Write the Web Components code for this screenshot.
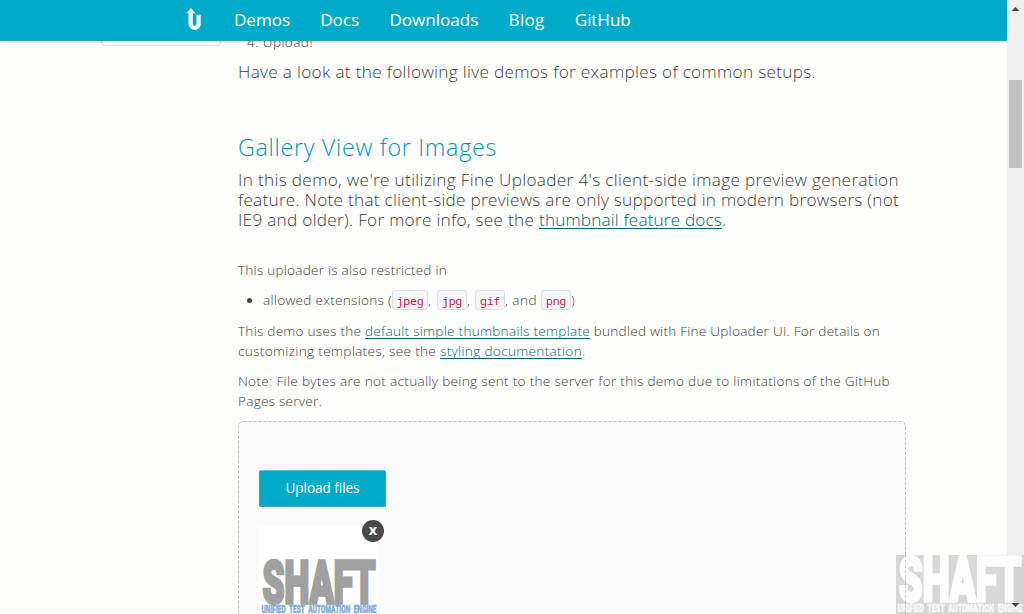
<!DOCTYPE html>
<html lang="en">
<head>
<meta charset="utf-8">
<title>Fine Uploader Demos</title>
<style>
html,body{margin:0;height:100%;overflow:hidden;background:#fefefc}
</style>
</head>
<body>
<demo-page></demo-page>
<script>
const define = (name, html, ready) => customElements.define(name, class extends HTMLElement {
  connectedCallback() {
    if (this.shadowRoot) return;
    const t = document.createElement('template');
    t.innerHTML = html;
    this.attachShadow({mode: 'open'}).append(t.content.cloneNode(true));
    if (ready) ready(this);
  }
});

/* Inline run of text tracked to a given measure */
define('text-run', `<style>
:host{display:inline-block;white-space:pre;vertical-align:baseline}
:host([link]){color:#00656f;text-decoration:underline;text-decoration-thickness:1px;text-underline-offset:2px;text-decoration-skip-ink:none}
span{display:inline-block;text-decoration:inherit}
</style><span><slot></slot></span>`, el => {
  const s = el.shadowRoot.querySelector('span'), w = +el.getAttribute('w');
  el.style.width = w + 'px';
  s.style.letterSpacing = (w - s.getBoundingClientRect().width) / el.textContent.length + 'px';
});

define('text-block', `<style>
:host{display:block;font-size:13.6px;line-height:20px;color:#3c3c3c;white-space:nowrap}
:host([lead]){font-size:17.2px}
::slotted(div){height:20px}
</style><slot></slot>`);

define('nav-bar', `<style>
:host{position:absolute;left:0;top:0;width:1007px;height:41px;box-sizing:border-box;display:flex;align-items:center;padding-left:186px;background:#00abc9;border-bottom:1px solid #23a3b6;box-shadow:0 1px 2px rgba(0,120,130,.25);color:#fff;font-size:17.2px;font-weight:500}
svg{width:16px;height:24px;margin-right:32px;margin-top:-2px;flex:none}
nav{display:flex;gap:30.2px;line-height:20px}
</style>
<svg viewBox="0 0 16 24"><path fill="#fff" d="M4.8 1 .3 6.300h2.200v9.200c0 4.700 2.600 7.200 6.200 7.200 3.700 0 6-2.500 6-6.800V7.700h-4.200v8.200c0 2.100-.6 3-1.800 3-1.300 0-1.900-.9-1.900-3V6.300h2.600z"/></svg>
<nav><text-run w="56">Demos</text-run><text-run w="39">Docs</text-run><text-run w="89">Downloads</text-run><text-run w="36">Blog</text-run><text-run w="56">GitHub</text-run></nav>`);

define('file-ext', `<style>
:host{display:flex;justify-content:center;align-items:center;box-sizing:border-box;height:20px;border:1px solid #dfdfe8;border-radius:3px;background:#f7f7f9;color:#d01445;font:11.5px/16px "Noto Sans Mono","DejaVu Sans Mono","Liberation Mono",monospace;letter-spacing:-.2px;padding-top:2px}
</style><slot></slot>`);

define('shaft-logo', `<style>
:host{display:block;line-height:0}
svg{display:block;width:100%;height:100%}
text{font-family:Roboto,"Open Sans",sans-serif;font-weight:900;stroke:currentColor;fill:currentColor}
.sub{fill:var(--sub);stroke:var(--sub);stroke-width:.35px;font-size:10.5px;word-spacing:3px}
</style><svg viewBox="0 0 118 58" preserveAspectRatio="none">
<text x="2.500" y="44.500" font-size="58.500" textLength="113" lengthAdjust="spacingAndGlyphs" stroke-width="3.300">SHAFT</text>
<text class="sub" x="1.500" y="54.800" textLength="115" lengthAdjust="spacingAndGlyphs">UNIFIED TEST AUTOMATION ENGINE</text></svg>`);

define('upload-panel', `<style>
:host{display:block;position:relative;box-sizing:border-box;width:668px;height:260px;border-radius:5px;background:#fafafa;padding:49px 21px}
.edge{position:absolute;left:0;top:0;width:668px;height:260px}
button{display:block;width:127px;height:37px;box-sizing:border-box;border:1px solid #35a9ba;border-top-color:#53c7d8;border-radius:2px;background:#00abc7;box-shadow:inset 0 0 0 1px rgba(0,145,180,.18);color:#fff;font:500 13.6px/20px "Open Sans","Noto Sans",sans-serif;padding:0 0 1px}
.thumb{position:relative;width:120px;height:100px;margin-top:18px;padding-top:33px;box-sizing:border-box;background:#fff}
shaft-logo{width:118px;height:58px;margin:0 1px;color:#a0a0a0;--sub:#7eabd2}
.close{position:absolute;left:103px;top:-5px;width:22px;height:22px;border-radius:50%;background:#494949;color:#fff;font:700 14.5px/20px "Open Sans",sans-serif;text-align:center}
</style>
<svg class="edge"><rect x=".5" y=".5" width="667" height="265" rx="5" fill="none" stroke="#c4c4c4" stroke-dasharray="3 2"/></svg>
<button><text-run w="74">Upload files</text-run></button>
<div class="thumb"><shaft-logo></shaft-logo><div class="close">x</div></div>`);

define('scroll-bar', `<style>
:host{display:block;width:17px;height:614px;background:#f0f0f0}
svg{display:block}
</style><svg width="17" height="614"><path d="M4.500 11 8.500 7l4 4z" fill="#484848"/><rect x="2" y="80" width="13" height="88" fill="#c1c1c1"/></svg>`);

define('water-mark', `<style>
:host{position:absolute;left:896px;top:555px;width:128px;height:59px;background:rgba(190,190,190,.6);overflow:hidden}
shaft-logo{width:128px;height:60px;color:#fdfdfd;--sub:#fafafa}
svg{position:absolute;left:0;top:0}
</style><shaft-logo></shaft-logo>
<svg width="128" height="59"><path d="M9.500 0v59" stroke="#b5b5b5" stroke-dasharray="3 2" opacity=".6"/><path d="M115.500 48h8l-4 4z" fill="#484848"/></svg>`);

define('demo-page', `<style>
:host{display:flex;position:relative;width:1024px;height:614px;overflow:hidden;background:#fefefc;font-family:"Open Sans","Noto Sans",sans-serif;font-weight:300}
main{width:1007px;display:grid;grid-template-columns:120px 668px;column-gap:17px;padding-left:101px;box-sizing:border-box;align-content:start}
aside{height:46px;box-sizing:border-box;border:1px solid #ddd;border-top:0;border-radius:0 0 4px 4px;background:#fdfdfd}
article{padding-top:32px}
h2{margin:50px 0 0;height:30px;font-size:23.3px;line-height:30px;font-weight:300;color:#0893ab}
.step{padding-left:9px}
.row{display:flex;align-items:center;padding-left:25px;position:relative}
.row::before{content:"";position:absolute;left:9px;top:8px;width:5px;height:5px;border-radius:50%;background:#444}
</style>
<main><aside></aside><article>
<text-block class="step"><div><text-run w="66">4. Upload!</text-run></div></text-block>
<text-block lead style="margin-top:10px"><div><text-run w="578">Have a look at the following live demos for examples of common setups.</text-run></div></text-block>
<h2><text-run w="259">Gallery View for Images</text-run></h2>
<text-block lead style="margin-top:8px">
<div><text-run w="661">In this demo, we're utilizing Fine Uploader 4's client-side image preview generation</text-run></div>
<div><text-run w="661">feature. Note that client-side previews are only supported in modern browsers (not</text-run></div>
<div><text-run w="301">IE9 and older). For more info, see the </text-run><text-run link w="183">thumbnail feature docs</text-run><text-run w="5">.</text-run></div></text-block>
<text-block style="margin-top:30px"><div><text-run w="209">This uploader is also restricted in</text-run></div></text-block>
<text-block style="margin-top:10px"><div class="row"><text-run w="129">allowed extensions (</text-run><file-ext style="width:36px">jpeg</file-ext><text-run w="9">, </text-run><file-ext style="width:30px">jpg</file-ext><text-run w="8">, </text-run><file-ext style="width:30px">gif</file-ext><text-run w="36">, and </text-run><file-ext style="width:30px">png</file-ext><text-run w="5">)</text-run></div></text-block>
<text-block style="margin-top:11px">
<div><text-run w="127">This demo uses the </text-run><text-run link w="225">default simple thumbnails template</text-run><text-run w="290"> bundled with Fine Uploader UI. For details on</text-run></div>
<div><text-run w="202">customizing templates, see the </text-run><text-run link w="142">styling documentation</text-run><text-run w="4">.</text-run></div></text-block>
<text-block style="margin-top:10px">
<div><text-run w="652">Note: File bytes are not actually being sent to the server for this demo due to limitations of the GitHub</text-run></div>
<div><text-run w="84">Pages server.</text-run></div></text-block>
<upload-panel style="margin-top:10px"></upload-panel>
</article></main>
<scroll-bar></scroll-bar><nav-bar></nav-bar><water-mark></water-mark>`);
</script>
</body>
</html>
